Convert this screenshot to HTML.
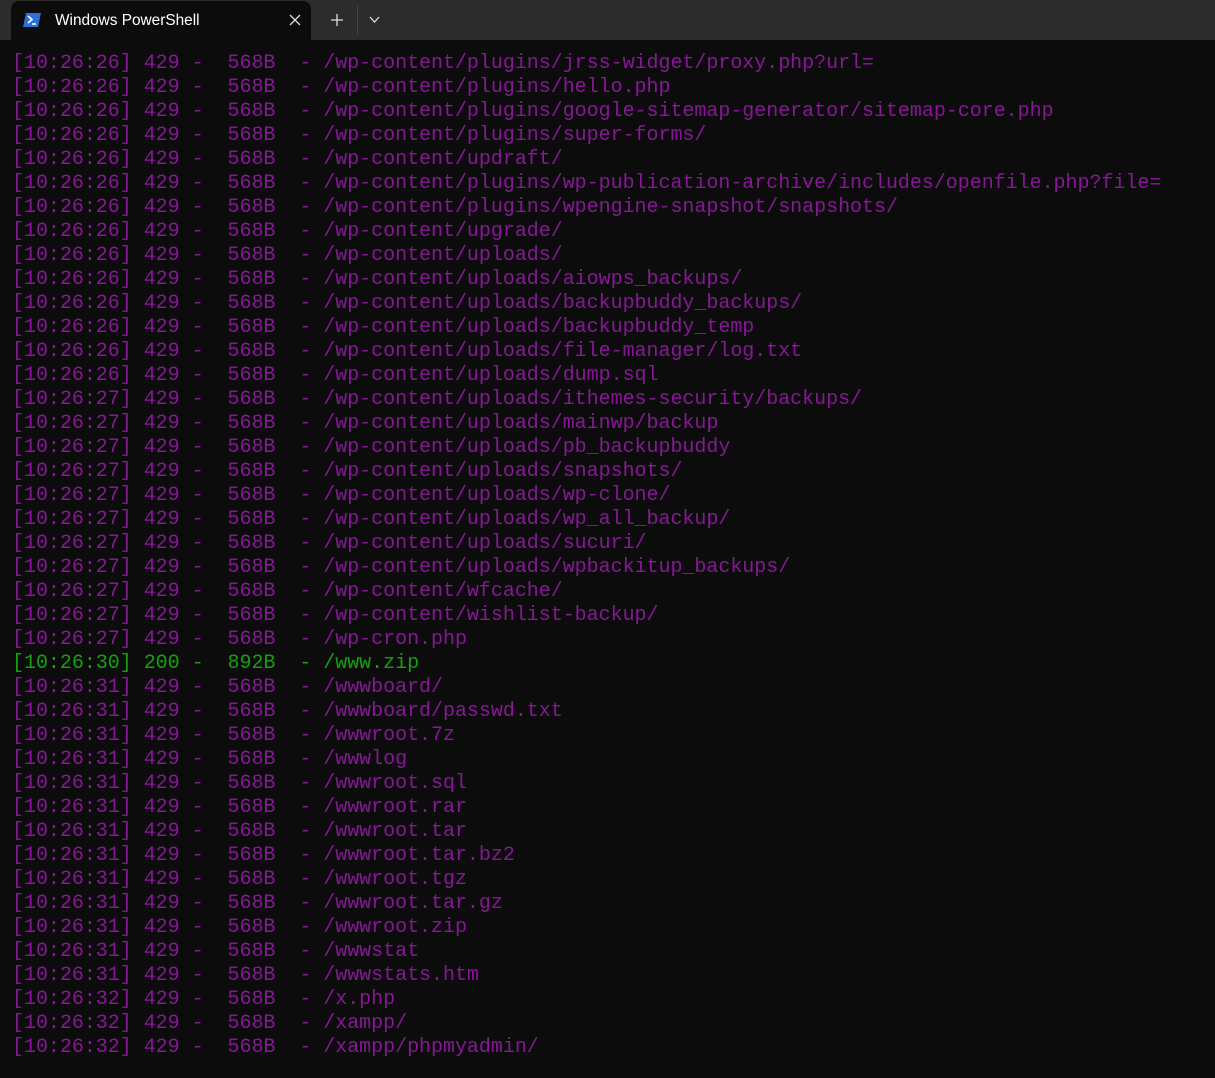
<!DOCTYPE html>
<html><head><style>
body{margin:0;width:1215px;height:1078px;background:#0c0c0c;overflow:hidden;font-family:"Liberation Sans",sans-serif}
.bar{position:absolute;left:0;top:0;width:1215px;height:40px;background:#2c2c2c}
.tab{position:absolute;left:11px;top:1px;width:300px;height:39px;background:#0c0c0c;border-radius:8px 8px 0 0}
.tab .t{position:absolute;left:44px;top:11px;color:#fff;font-size:15.4px}
.x{position:absolute;left:277px;top:12px;}
pre{position:absolute;left:12px;top:52px;margin:0;font-family:"Liberation Mono",monospace;font-size:20px;line-height:24px;letter-spacing:-0.03px;color:#881798}
.g{color:#13a10e}
</style></head><body>
<div class="bar"><div class="tab">
<svg style="position:absolute;left:12px;top:11px" width="18" height="16" viewBox="0 0 18 16"><polygon points="3,1 18,1 15,15 0,15" fill="#2f6fd6"/><path d="M5 4 L9 7.5 L5 11" stroke="#fff" stroke-width="1.6" fill="none"/><path d="M9 12 H13" stroke="#fff" stroke-width="1.6"/></svg>
<span class="t">Windows PowerShell</span>
<svg class="x" width="14" height="14" viewBox="0 0 14 14"><path d="M2 2L12 12M12 2L2 12" stroke="#ddd" stroke-width="1.3"/></svg>
</div>
<svg style="position:absolute;left:330px;top:13px" width="14" height="14"><path d="M7 1V13M1 7H13" stroke="#ddd" stroke-width="1.3"/></svg>
<div style="position:absolute;left:357px;top:6px;width:1px;height:28px;background:#444"></div>
<svg style="position:absolute;left:369px;top:16px" width="11" height="8"><path d="M1 1L5.5 6L10 1" stroke="#ddd" stroke-width="1.3" fill="none"/></svg>
</div>
<pre>[10:26:26] 429 -  568B  - /wp-content/plugins/jrss-widget/proxy.php?url=
[10:26:26] 429 -  568B  - /wp-content/plugins/hello.php
[10:26:26] 429 -  568B  - /wp-content/plugins/google-sitemap-generator/sitemap-core.php
[10:26:26] 429 -  568B  - /wp-content/plugins/super-forms/
[10:26:26] 429 -  568B  - /wp-content/updraft/
[10:26:26] 429 -  568B  - /wp-content/plugins/wp-publication-archive/includes/openfile.php?file=
[10:26:26] 429 -  568B  - /wp-content/plugins/wpengine-snapshot/snapshots/
[10:26:26] 429 -  568B  - /wp-content/upgrade/
[10:26:26] 429 -  568B  - /wp-content/uploads/
[10:26:26] 429 -  568B  - /wp-content/uploads/aiowps_backups/
[10:26:26] 429 -  568B  - /wp-content/uploads/backupbuddy_backups/
[10:26:26] 429 -  568B  - /wp-content/uploads/backupbuddy_temp
[10:26:26] 429 -  568B  - /wp-content/uploads/file-manager/log.txt
[10:26:26] 429 -  568B  - /wp-content/uploads/dump.sql
[10:26:27] 429 -  568B  - /wp-content/uploads/ithemes-security/backups/
[10:26:27] 429 -  568B  - /wp-content/uploads/mainwp/backup
[10:26:27] 429 -  568B  - /wp-content/uploads/pb_backupbuddy
[10:26:27] 429 -  568B  - /wp-content/uploads/snapshots/
[10:26:27] 429 -  568B  - /wp-content/uploads/wp-clone/
[10:26:27] 429 -  568B  - /wp-content/uploads/wp_all_backup/
[10:26:27] 429 -  568B  - /wp-content/uploads/sucuri/
[10:26:27] 429 -  568B  - /wp-content/uploads/wpbackitup_backups/
[10:26:27] 429 -  568B  - /wp-content/wfcache/
[10:26:27] 429 -  568B  - /wp-content/wishlist-backup/
[10:26:27] 429 -  568B  - /wp-cron.php
<span class="g">[10:26:30] 200 -  892B  - /www.zip</span>
[10:26:31] 429 -  568B  - /wwwboard/
[10:26:31] 429 -  568B  - /wwwboard/passwd.txt
[10:26:31] 429 -  568B  - /wwwroot.7z
[10:26:31] 429 -  568B  - /wwwlog
[10:26:31] 429 -  568B  - /wwwroot.sql
[10:26:31] 429 -  568B  - /wwwroot.rar
[10:26:31] 429 -  568B  - /wwwroot.tar
[10:26:31] 429 -  568B  - /wwwroot.tar.bz2
[10:26:31] 429 -  568B  - /wwwroot.tgz
[10:26:31] 429 -  568B  - /wwwroot.tar.gz
[10:26:31] 429 -  568B  - /wwwroot.zip
[10:26:31] 429 -  568B  - /wwwstat
[10:26:31] 429 -  568B  - /wwwstats.htm
[10:26:32] 429 -  568B  - /x.php
[10:26:32] 429 -  568B  - /xampp/
[10:26:32] 429 -  568B  - /xampp/phpmyadmin/</pre>
</body></html>
